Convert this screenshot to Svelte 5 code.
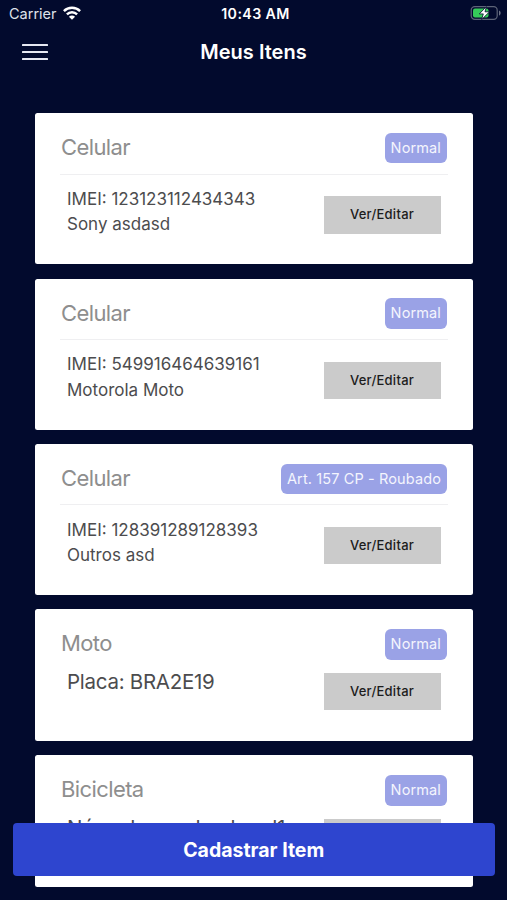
<script>
  const items = [
    { type: "Celular", status: "Normal", lines: ["IMEI: 123123112434343", "Sony asdasd"] },
    { type: "Celular", status: "Normal", lines: ["IMEI: 549916464639161", "Motorola Moto"] },
    { type: "Celular", status: "Art. 157 CP - Roubado", lines: ["IMEI: 128391289128393", "Outros asd"] },
    { type: "Moto", status: "Normal", lines: ["Placa: BRA2E19"] },
    { type: "Bicicleta", status: "Normal", lines: ["Núm. do quadro: basd1"] },
  ];
</script>

<div class="screen">
  <div class="statusbar">
    <div class="carrier">
      <span>Carrier</span>
      <svg width="18" height="14" viewBox="0 0 18 14" fill="none" stroke="#fff" stroke-width="2.4" aria-hidden="true">
        <path d="M.9 5.1C5.3.6 12.7.6 17.1 5.1" />
        <path d="M3.9 8.4C6.7 5.5 11.3 5.5 14.1 8.4" />
        <path d="M9 13.8 5.9 10.8C7.6 9.1 10.4 9.1 12.1 10.8Z" fill="#fff" stroke="none" />
      </svg>
    </div>
    <span class="time">10:43 AM</span>
    <svg class="battery" width="32" height="16" viewBox="0 0 32 16" aria-hidden="true">
      <rect x="1.2" y="1.7" width="26" height="12.6" rx="3.6" fill="none" stroke="#5d6478" stroke-width="1.2" />
      <path d="M29 5.5c2.2.9 2.2 4.2 0 5.1z" fill="#6d7386" />
      <rect x="3" y="3.5" width="15.5" height="9" rx="2" fill="#35cb59" />
      <path d="M16.4 1.6 9.3 8.9h4L11.6 14.6l7.9-7.8h-4.5z" fill="#fff" stroke="#020b2c" stroke-width=".8" />
    </svg>
  </div>

  <header class="nav">
    <button class="menu" aria-label="Menu">
      <span></span>
      <span></span>
      <span></span>
    </button>
    <h1>Meus Itens</h1>
  </header>

  <main class="list">
    {#each items as item}
      <article class="card">
        <div class="head" class:divided={item.lines.length > 1}>
          <h2>{item.type}</h2>
          <span class="badge">{item.status}</span>
        </div>
        <div class="body" class:single={item.lines.length === 1}>
          <div class="info">
            {#each item.lines as line}
              <p>{line}</p>
            {/each}
          </div>
          <button class="edit">Ver/Editar</button>
        </div>
      </article>
    {/each}
  </main>

  <button class="add">Cadastrar Item</button>
</div>

<style>
  :global(body) {
    background: #020a2d;
  }

  .screen {
    position: relative;
    box-sizing: border-box;
    height: 900px;
    overflow: hidden;
    background: #020a2d;
    color: #fff;
    font-family: Inter, "Liberation Sans", sans-serif;
  }

  button {
    padding: 0;
    border: 0;
    font: inherit;
    cursor: pointer;
  }

  h1,
  h2,
  p {
    margin: 0;
    font-weight: 400;
    white-space: nowrap;
  }

  .statusbar {
    display: grid;
    grid-template-columns: 1fr auto 1fr;
    align-items: center;
    height: 28px;
    padding: 0 5px 0 9px;
    font-size: 14.5px;
  }

  .carrier {
    display: flex;
    align-items: center;
    gap: 6px;
    color: #dfe2ea;
    line-height: 16px;
    margin-top: -1px;
  }

  .carrier svg {
    margin-top: -1px;
  }

  .time {
    margin-top: -1px;
    font-weight: 600;
    font-size: 14.2px;
    letter-spacing: 0.4px;
  }

  .battery {
    justify-self: end;
    margin-top: -2px;
  }

  .nav {
    display: grid;
    grid-template-columns: 1fr auto 1fr;
    align-items: center;
    height: 48px;
    padding: 0 22px;
    margin-bottom: 37.2px;
  }

  .menu {
    display: flex;
    flex-direction: column;
    gap: 4.5px;
    width: 26px;
    background: none;
  }

  .menu span {
    height: 2.2px;
    border-radius: 0.5px;
    background: #e6e8f2;
  }

  h1 {
    font-size: 20px;
    font-weight: 600;
  }

  .list {
    display: flex;
    flex-direction: column;
    gap: 14.4px;
    padding: 0 34.5px 0 35px;
  }

  .card {
    box-sizing: border-box;
    height: 151px;
    padding: 20px 25px 0;
    border-radius: 2.5px;
    background: #fff;
  }

  .card:has(.single) {
    height: 131.6px;
  }

  .head {
    display: flex;
    align-items: center;
    justify-content: space-between;
    height: 30px;
    padding: 0 0.5px 0 1px;
  }

  .divided {
    padding-bottom: 10.5px;
    border-bottom: 1px solid #efeff1;
  }

  h2 {
    margin-top: -2px;
    color: #8e8e8e;
    font-size: 22px;
    line-height: 28px;
    letter-spacing: -0.6px;
  }

  .badge {
    padding: 0 6px;
    border-radius: 6px;
    background: #9aa2e6;
    color: #f4f5fd;
    font-size: 14.5px;
    line-height: 30.5px;
    letter-spacing: 0.12px;
    white-space: nowrap;
  }

  .body {
    display: flex;
    align-items: flex-start;
    justify-content: space-between;
    padding: 11.5px 7px 0;
  }

  .info {
    padding-top: 0.6px;
    color: #4c4c4e;
    font-size: 17px;
    line-height: 25.6px;
  }

  .edit {
    flex: none;
    width: 117px;
    height: 37.5px;
    padding-bottom: 1px;
    margin-top: 10px;
    background: #cbcbcb;
    color: #1c1c1c;
    font-size: 13px;
    font-weight: 450;
    letter-spacing: 0.25px;
  }

  .single {
    padding-top: 9.5px;
  }

  .single .info {
    font-size: 20.5px;
    line-height: 26px;
    letter-spacing: -0.27px;
  }

  .single .edit {
    margin-top: 4px;
  }

  .add {
    position: absolute;
    left: 13px;
    right: 12.5px;
    bottom: 24.5px;
    height: 52.5px;
    padding-top: 1px;
    border-radius: 4px;
    background: #2e45cf;
    color: #fff;
    font-size: 19.5px;
    font-weight: 700;
  }
</style>
